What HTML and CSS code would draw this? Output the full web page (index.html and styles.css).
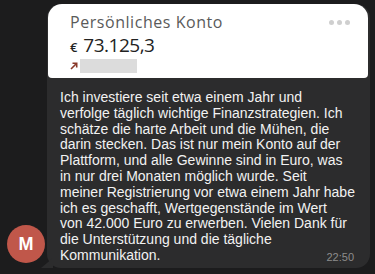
FILE: index.html
```html
<!DOCTYPE html>
<html lang="de">
<head>
<meta charset="utf-8">
<link rel="stylesheet" href="styles.css">
</head>
<body>
<div class="row">
  <div class="avatar">M</div>
  <div class="bubble">
    <div class="card">
      <div class="card-head">
        <div class="card-title">Persönliches Konto</div>
        <div class="dots"><i></i><i></i><i></i></div>
      </div>
      <div class="amount"><span class="cur">€</span> 73.125,3</div>
      <div class="trend">
        <svg class="arrow" width="8" height="8" viewBox="0 0 8 8"><path d="M1 7 L6.5 1.5 M2.5 1.3 H6.7 V5.5" fill="none" stroke="#8a3a2a" stroke-width="1.6"/></svg>
        <span class="blur"></span>
      </div>
    </div>
    <p class="text">Ich investiere seit etwa einem Jahr und<br>verfolge täglich wichtige Finanzstrategien. Ich<br>schätze die harte Arbeit und die Mühen, die<br>darin stecken. Das ist nur mein Konto auf der<br>Plattform, und alle Gewinne sind in Euro, was<br>in nur drei Monaten möglich wurde. Seit<br>meiner Registrierung vor etwa einem Jahr habe<br>ich es geschafft, Wertgegenstände im Wert<br>von 42.000 Euro zu erwerben. Vielen Dank für<br>die Unterstützung und die tägliche<br>Kommunikation.<span class="time">22:50</span></p>
  </div>
</div>
</body>
</html>
```

FILE: styles.css
```css
html, body {
  margin: 0;
  padding: 0;
  background: #1c1c1d;
  width: 375px;
  height: 274px;
  overflow: hidden;
}
.row {
  display: flex;
  align-items: flex-end;
  padding: 4px 0 0 7px;
  gap: 2px;
}
.avatar {
  flex: none;
  width: 38px;
  height: 38px;
  border-radius: 50%;
  background: #c0574a;
  color: #fff;
  font: bold 18px "Liberation Sans", Arial, sans-serif;
  display: flex;
  align-items: center;
  justify-content: center;
  margin-bottom: 5px;
}
.bubble {
  position: relative;
  width: 323px;
  height: 264px;
  background: #2c2c2d;
  border-radius: 14px;
  box-sizing: border-box;
}
.bubble::before {
  content: "";
  position: absolute;
  left: -6px;
  bottom: 0;
  width: 12px;
  height: 10px;
  background: #2c2c2d;
  clip-path: polygon(100% 0, 100% 100%, 0 100%);
}
.card {
  background: #fff;
  margin: 0 2px 0 1px;
  height: 74px;
  border-radius: 14px 14px 4px 4px;
  box-sizing: border-box;
  padding: 8px 18px 0 22px;
  font-family: "Open Sans", sans-serif;
}
.card-head {
  display: flex;
  justify-content: space-between;
  align-items: center;
}
.card-title {
  font-size: 16px;
  letter-spacing: 0.55px;
  color: #5a5a5a;
  line-height: 20px;
}
.dots {
  display: flex;
  gap: 3px;
}
.dots i {
  width: 5px;
  height: 5px;
  border-radius: 50%;
  background: #cfcfcf;
}
.amount {
  font-size: 19px;
  font-weight: 500;
  letter-spacing: -0.5px;
  color: #222;
  line-height: 24px;
  margin-top: 1px;
}
.cur {
  font-size: 13px;
  font-weight: 600;
  margin-right: 2px;
}
.trend {
  display: flex;
  align-items: center;
  gap: 2px;
}
.blur {
  width: 57px;
  height: 14px;
  background: #dcdcdc;
}
.text {
  margin: 0;
  padding: 12px 8px 0 13px;
  font: 14px/15.8px "Liberation Sans", Arial, sans-serif;
  color: #f2f2f2;
  white-space: nowrap;
}
.time {
  float: right;
  font-size: 11px;
  color: #8c8c8c;
  margin: 2px 8px 0 0;
}
```
